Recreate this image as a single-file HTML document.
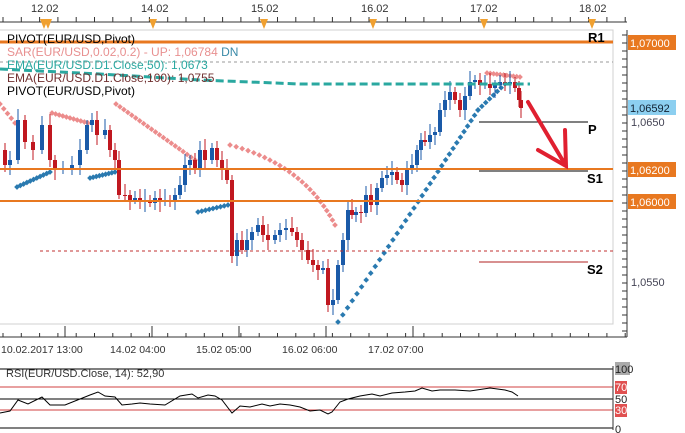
<!DOCTYPE html><html><head><style>
body{margin:0;width:685px;height:433px;overflow:hidden;background:#fff;font-family:"Liberation Sans",sans-serif}
svg{position:absolute;left:0;top:0}
text{font-family:"Liberation Sans",sans-serif;font-size:11px}
.lg text{font-size:12px}
.bt text{font-size:10.5px}
</style></head><body>
<svg id="s" width="685" height="433" xmlns="http://www.w3.org/2000/svg">
<rect x="-1" y="30" width="614" height="294" fill="none" stroke="#d0d0d0"/>
<g id="sar"></g><g id="c"></g>
<line x1="0" y1="62" x2="613" y2="62" stroke="#999" stroke-dasharray="3,3"/>
<line x1="40" y1="251" x2="613" y2="251" stroke="#c03030" stroke-dasharray="3,3"/>
<polyline points="0,69 100,74 200,80 300,84 530,84" fill="none" stroke="#2aa8a0" stroke-width="3" stroke-dasharray="8,4"/>
<line x1="0" y1="42" x2="613" y2="42" stroke="#e87820" stroke-width="3"/>
<line x1="0" y1="169" x2="613" y2="169" stroke="#e87820" stroke-width="2"/>
<line x1="0" y1="201" x2="613" y2="201" stroke="#e87820" stroke-width="2"/>
<line x1="479" y1="122" x2="588" y2="122" stroke="#000"/>
<line x1="479" y1="171" x2="588" y2="171" stroke="#000"/>
<line x1="479" y1="262" x2="588" y2="262" stroke="#b02020"/>
<g font-weight="bold"><text x="588" y="42" style="font-size:13px">R1</text><text x="588" y="134" style="font-size:13px">P</text><text x="587" y="183" style="font-size:13px">S1</text><text x="587" y="274" style="font-size:13px">S2</text></g>
<path d="M528,102 L566,166 M538,150 L566,166 L565,130" fill="none" stroke="#e02030" stroke-width="4" stroke-linecap="round"/>
<g class="lg">
<text x="7" y="43" fill="#000">PIVOT(EUR/USD,Pivot)</text>
<text x="7" y="56" fill="#e89090">SAR(EUR/USD,0.02,0.2) -  UP: 1,06784  <tspan fill="#3a8aa8">DN</tspan></text>
<text x="7" y="69" fill="#2aa8a0">EMA(EUR/USD.D1.Close,50): 1,0673</text>
<text x="7" y="82" fill="#703030">EMA(EUR/USD.D1.Close,100): 1,0755</text>
<text x="7" y="95" fill="#000">PIVOT(EUR/USD,Pivot)</text>
</g>
<line x1="0" y1="22" x2="627" y2="22" stroke="#333"/>
<g id="tt"></g>
<g fill="#333"><text x="31" y="12">12.02</text><text x="141" y="12">14.02</text><text x="251" y="12">15.02</text><text x="361" y="12">16.02</text><text x="470" y="12">17.02</text><text x="579" y="12">18.02</text></g>
<line x1="627" y1="30" x2="627" y2="337" stroke="#333"/>
<line x1="0" y1="337" x2="627" y2="337" stroke="#333"/>
<g id="pt"></g>
<rect x="628" y="35" width="48" height="15" fill="#e87820"/><text x="630" y="47" fill="#fff">1,07000</text>
<rect x="628" y="100" width="48" height="15" fill="#8ccff0"/><text x="630" y="112" fill="#123">1,06592</text>
<text x="631" y="126" fill="#445">1,0650</text>
<rect x="628" y="162" width="48" height="15" fill="#e87820"/><text x="630" y="174" fill="#fff">1,06200</text>
<rect x="628" y="194" width="48" height="15" fill="#e87820"/><text x="630" y="206" fill="#fff">1,06000</text>
<text x="631" y="286" fill="#445">1,0550</text>
<g fill="#333" class="bt"><text x="1" y="353">10.02.2017 13:00</text><text x="110" y="353">14.02 04:00</text><text x="196" y="353">15.02 05:00</text><text x="282" y="353">16.02 06:00</text><text x="368" y="353">17.02 07:00</text></g>
<line x1="0" y1="369" x2="613" y2="369" stroke="#000"/>
<line x1="0" y1="387" x2="613" y2="387" stroke="#d04040"/>
<line x1="0" y1="399" x2="613" y2="399" stroke="#000"/>
<line x1="0" y1="410" x2="613" y2="410" stroke="#d04040"/>
<line x1="0" y1="428" x2="613" y2="428" stroke="#000"/>
<line x1="613" y1="366" x2="613" y2="430" stroke="#333"/>
<text x="6" y="377" fill="#333">RSI(EUR/USD.Close, 14): 52,90</text>
<rect x="615" y="362" width="15" height="13" fill="#aaa"/><text x="615" y="373" fill="#222">100</text>
<rect x="615" y="381" width="12" height="13" fill="#e05050"/><text x="615" y="391" fill="#fff">70</text>
<text x="615" y="403" fill="#222">50</text>
<rect x="615" y="404" width="12" height="13" fill="#e05050"/><text x="615" y="414" fill="#fff">30</text>
<text x="615" y="433" fill="#222">0</text>
<polyline fill="none" stroke="#000" points="0,413 10,411 18,400 28,404 42,397 50,405 65,405 90,395 98,392 105,396 115,397 122,405 132,404 140,403 150,404 165,405 180,396 192,394 198,398 208,395 215,396 222,400 232,413 240,406 250,407 262,404 270,406 280,404 290,405 300,407 310,411 320,410 328,414 332,412 340,402 348,399 360,396 372,394 380,396 392,393 405,392 415,391 422,388 432,391 440,390 455,390 470,391 490,388 505,390 512,392 518,396"/>
</svg>
<script>
var s='http://www.w3.org/2000/svg';function el(p,t,a){var e=document.createElementNS(s,t);for(var k in a)e.setAttribute(k,a[k]);document.getElementById(p).appendChild(e);return e}
for(var x=3;x<627;x+=18.3){el('tt','line',{x1:x,y1:17,x2:x,y2:22,stroke:'#333'});el('pt','line',{x1:x,y1:333,x2:x,y2:337,stroke:'#333'})}
[44,48,153,264,373,484,592].forEach(function(x){el('tt','path',{d:'M'+(x-4)+',19 L'+(x+4)+',19 L'+x+',29Z',fill:'#f0a030'})});
[65,152,239,326,413].forEach(function(x){el('pt','line',{x1:x,y1:326,x2:x,y2:337,stroke:'#333'})});
for(var y=35;y<335;y+=8)el('pt','line',{x1:622,y1:y,x2:627,y2:y,stroke:'#333'});
var pts=[[0,150],[5,165],[10,160],[18,120],[25,142],[33,150],[42,125],[50,160],[55,170],[63,168],[72,165],[80,150],[87,125],[92,120],[97,135],[105,130],[110,150],[115,160],[119,195],[125,195],[130,200],[135,198],[140,202],[145,200],[150,203],[155,198],[160,202],[165,200],[170,200],[175,195],[180,185],[185,165],[190,160],[195,170],[200,150],[205,160],[212,148],[217,160],[222,170],[227,180],[232,256],[237,240],[242,250],[247,240],[252,232],[258,225],[263,235],[268,240],[275,235],[280,230],[286,228],[292,232],[297,240],[302,250],[308,260],[313,265],[318,270],[323,268],[328,305],[333,300],[338,265],[343,240],[348,210],[352,215],[356,212],[361,213],[366,195],[371,205],[377,188],[382,178],[387,175],[392,172],[397,180],[402,185],[407,170],[412,165],[417,150],[421,140],[425,142],[430,135],[435,132],[440,110],[445,100],[450,92],[455,100],[460,110],[465,96],[470,82],[475,80],[480,85],[485,84],[490,88],[495,85],[500,82],[505,84],[510,82],[515,88],[519,100],[521,108]];
for(var i=1;i<pts.length;i++){var x=pts[i][0],o=pts[i-1][1],c=pts[i][1];var t=Math.min(o,c),b=Math.max(o,c);var col=c<o?'#1a5aa8':'#c01820';
el('c','line',{x1:x,y1:t-5-(i%4)*2,x2:x,y2:b+4+(i%3)*3,stroke:col});el('c','rect',{x:x-2,y:t,width:4,height:Math.max(1,b-t),fill:col});}
function seg(x1,y1,x2,y2,n,col,cx,cy){for(var k=0;k<=n;k++){var u=k/n;var x=x1+(x2-x1)*u,y=y1+(y2-y1)*u;if(cx!==undefined){y=(1-u)*(1-u)*y1+2*u*(1-u)*cy+u*u*y2;x=(1-u)*(1-u)*x1+2*u*(1-u)*cx+u*u*x2;}el('sar','rect',{x:x-2,y:y-2,width:4,height:4,fill:col,transform:'rotate(45 '+x+' '+y+')'})}}
var pk='#ec8c8c',bl='#2a7ab0';
seg(0,104,15,123,4,pk);seg(52,113,88,123,10,pk);seg(116,104,195,160,20,pk);seg(230,145,335,225,24,pk,305,165);seg(487,73,520,77,10,pk);
seg(17,187,50,172,10,bl);seg(90,178,115,172,8,bl);seg(198,212,228,205,8,bl);seg(338,322,478,110,34,bl,420,200);seg(478,110,505,84,7,bl);
</script>
</body></html>
